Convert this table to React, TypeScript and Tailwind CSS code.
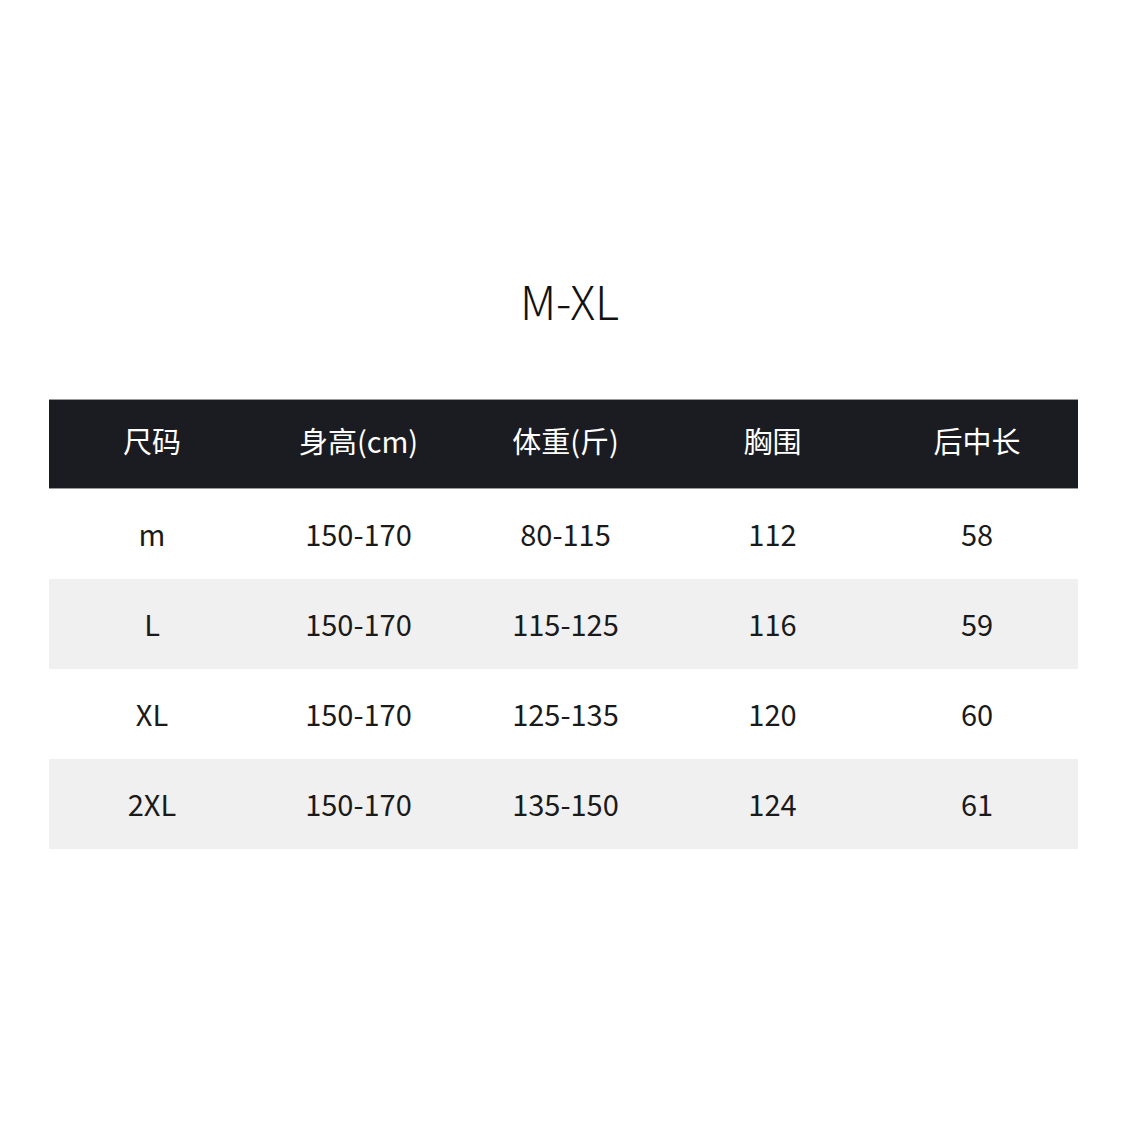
const headers = ["尺码", "身高(cm)", "体重(斤)", "胸围", "后中长"];

const rows = [
  ["m", "150-170", "80-115", "112", "58"],
  ["L", "150-170", "115-125", "116", "59"],
  ["XL", "150-170", "125-135", "120", "60"],
  ["2XL", "150-170", "135-150", "124", "61"],
];

const font = { fontFamily: '"Noto Sans CJK SC", "Noto Sans", sans-serif' };

export default function App() {
  return (
    <main className="w-[1125px] h-[1125px] bg-white text-[#1a1a1a]" style={font}>
      <div className="pt-[270px] flex flex-col">
        <h1 className="text-center pl-[14px] text-[46px] leading-[60px] font-light text-[#111]">M-XL</h1>
        <div className="mt-[69px] mx-[49px] w-[1029px]">
          <div className="grid grid-cols-[206px_207px_207px_207px_202px] h-[90px] bg-[#1b1c21] border-y border-[#9a9a9a] text-white items-center pb-[6px]">
            {headers.map((h) => (
              <div key={h} className="text-center text-[29px]">
                {h}
              </div>
            ))}
          </div>
          {rows.map((row, i) => (
            <div
              key={row[0]}
              className={`grid grid-cols-[206px_207px_207px_207px_202px] h-[90px] items-center ${i % 2 === 1 ? "bg-[#f0f0f0]" : "bg-white"}`}
            >
              {row.map((cell, j) => (
                <div key={j} className="text-center text-[29px]">
                  {cell}
                </div>
              ))}
            </div>
          ))}
        </div>
      </div>
    </main>
  );
}
